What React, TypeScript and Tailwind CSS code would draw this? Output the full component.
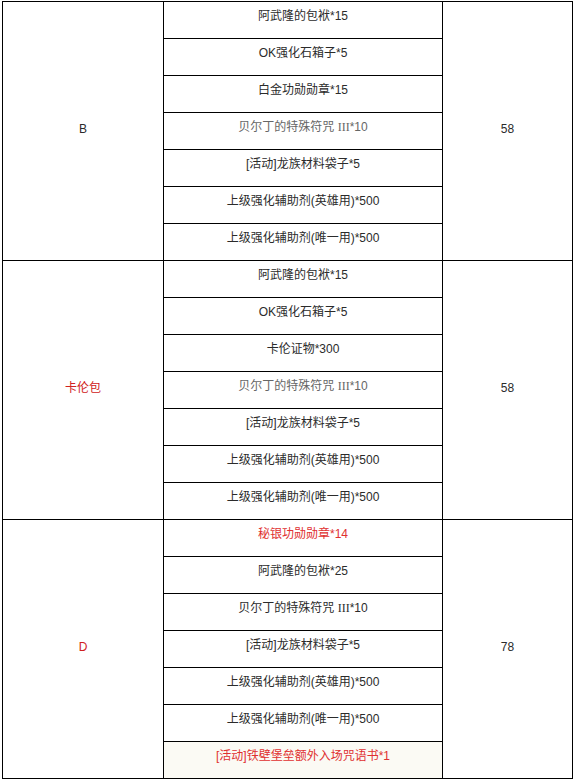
const NORMAL = "text-[#2b2b2b]";
const GRAY = "text-[#666666]";
const RED = "text-[#e03030]";

type Item = { text: string; tone?: "gray" | "red"; bg?: boolean };
type Block = { label: string; labelRed?: boolean; price: string; items: Array<Item> };

const blocks: Array<Block> = [
  {
    label: "B",
    price: "58",
    items: [
      { text: "阿武隆的包袱*15" },
      { text: "OK强化石箱子*5" },
      { text: "白金功勋勋章*15" },
      { text: "贝尔丁的特殊符咒 III*10", tone: "gray" },
      { text: "[活动]龙族材料袋子*5" },
      { text: "上级强化辅助剂(英雄用)*500" },
      { text: "上级强化辅助剂(唯一用)*500" },
    ],
  },
  {
    label: "卡伦包",
    labelRed: true,
    price: "58",
    items: [
      { text: "阿武隆的包袱*15" },
      { text: "OK强化石箱子*5" },
      { text: "卡伦证物*300" },
      { text: "贝尔丁的特殊符咒 III*10", tone: "gray" },
      { text: "[活动]龙族材料袋子*5" },
      { text: "上级强化辅助剂(英雄用)*500" },
      { text: "上级强化辅助剂(唯一用)*500" },
    ],
  },
  {
    label: "D",
    labelRed: true,
    price: "78",
    items: [
      { text: "秘银功勋勋章*14", tone: "red" },
      { text: "阿武隆的包袱*25" },
      { text: "贝尔丁的特殊符咒 III*10" },
      { text: "[活动]龙族材料袋子*5" },
      { text: "上级强化辅助剂(英雄用)*500" },
      { text: "上级强化辅助剂(唯一用)*500" },
      { text: "[活动]铁壁堡垒额外入场咒语书*1", tone: "red", bg: true },
    ],
  },
];

function toneClass(tone?: "gray" | "red") {
  if (tone === "gray") return GRAY;
  if (tone === "red") return RED;
  return NORMAL;
}

// roman numerals in the source render in a serif face
function ItemText({ text }: { text: string }) {
  const parts = text.split(" III");
  if (parts.length === 1) return <>{text}</>;
  return (
    <>
      {parts[0]}{" "}
      <span style={{ fontFamily: '"Liberation Serif", serif' }}>III</span>
      {parts[1]}
    </>
  );
}

export default function App() {
  return (
    <div className="min-h-[779px] w-[573px] bg-white pl-[2px] pt-[1px]">
      <div
        className="w-[571px] border-l border-t border-black text-[12px]"
        style={{ fontFamily: '"Liberation Sans", "Noto Sans CJK SC", sans-serif' }}
      >
        {blocks.map((block, i) => (
          <div key={i} className="flex">
            <div
              className={`flex w-[161px] items-center justify-center border-b border-r border-black pb-[5px] ${block.labelRed ? "text-[#d02020]" : NORMAL}`}
            >
              {block.label}
            </div>
            <div className="flex w-[279px] flex-col">
              {block.items.map((item, j) => (
                <div
                  key={j}
                  className={`flex h-[37px] justify-center border-b border-r border-black pt-[5px] leading-[18px] ${toneClass(item.tone)} ${item.bg ? "bg-[#fbfaf4]" : ""}`}
                >
                  <span>
                    <ItemText text={item.text} />
                  </span>
                </div>
              ))}
            </div>
            <div className={`flex w-[130px] items-center justify-center border-b border-r border-black pb-[5px] ${NORMAL}`}>
              {block.price}
            </div>
          </div>
        ))}
      </div>
    </div>
  );
}
